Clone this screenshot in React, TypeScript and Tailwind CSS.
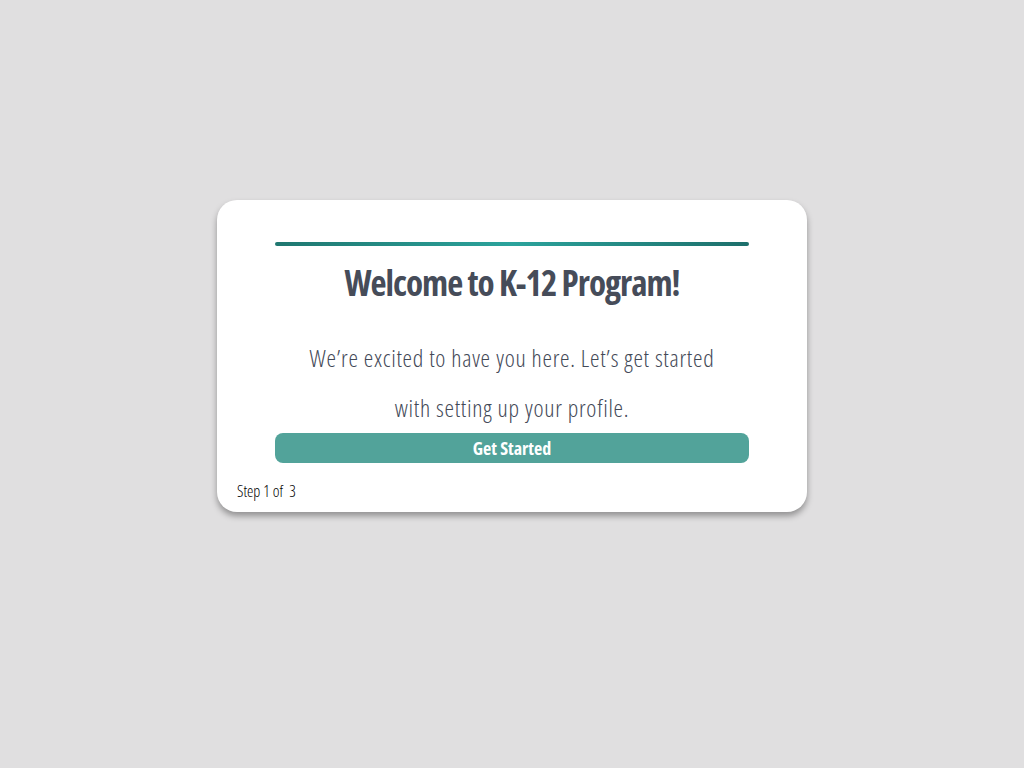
export default function App() {
  return (
    <main
      className="min-h-screen w-full bg-[#e0dfe0] pt-[200px] font-stretch-[75%]"
      style={{ fontFamily: '"Open Sans", "Liberation Sans", sans-serif' }}
    >
      <div className="mx-auto w-[590px] rounded-[20px] bg-white px-5 pt-[42px] pb-[9px] shadow-[0_4px_6px_rgba(0,0,0,0.35)]">
        <div className="mx-auto w-[474px]">
          <div className="h-1 w-full rounded-full bg-gradient-to-r from-[#1f7770] via-[#2ba39c] to-[#1d6f6b]" />
          <h1 className="mt-[15px] text-center text-[35px] leading-[43px] font-bold whitespace-nowrap tracking-[-1px] text-[#464c59]">
            Welcome to K-12 Program!
          </h1>
          <p className="mt-[29px] text-center text-[24px] leading-[50px] font-light whitespace-nowrap tracking-[0.7px] text-[#434957]">
            We’re excited to have you here. Let’s get started
            <br />
            with setting up your profile.
          </p>
          <button className="block h-[30px] w-full rounded-lg bg-[#52a39a] text-[18px] leading-[30px] font-bold text-white">
            Get Started
          </button>
        </div>
        <div className="mt-4 text-[16px] leading-6 font-light text-black">Step 1 of&nbsp; 3</div>
      </div>
    </main>
  );
}
